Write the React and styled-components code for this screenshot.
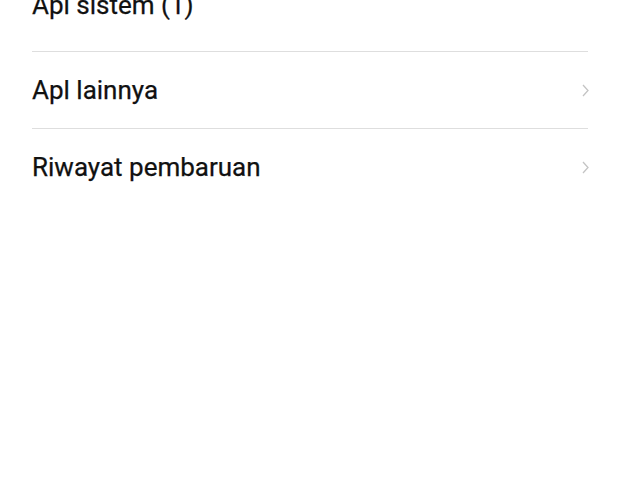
import React from 'react';
import styled, { createGlobalStyle } from 'styled-components';

const GlobalStyle = createGlobalStyle`
  html, body {
    margin: 0;
    padding: 0;
    background: #fff;
  }
  body {
    font-family: Roboto, "Noto Sans", sans-serif;
    overflow: hidden;
  }
`;

const StPage = styled.div`
  width: 622px;
  height: 500px;
  overflow: hidden;
  background: #fff;
  padding: 0 34px 0 32px;
  box-sizing: border-box;
`;

const StList = styled.div`
  margin-top: -33px;
  display: flex;
  flex-direction: column;
`;

const StRow = styled.div`
  display: flex;
  align-items: center;
  justify-content: space-between;
  height: 76px;
  padding-bottom: ${(props) => props.$extra || 0}px;
  border-bottom: ${(props) => (props.$last ? 'none' : '1px solid #dedede')};
`;

const StLabel = styled.span`
  font-size: 26px;
  font-weight: 400;
  color: #111;
  -webkit-text-stroke: 0.25px #111;
`;

const StChevron = styled.svg`
  width: 7px;
  height: 13px;
  margin-right: -1px;
  flex: none;
`;

const Chevron = () => (
  <StChevron viewBox="0 0 7 13">
    <path d="M1 1 L6 6.5 L1 12" fill="none" stroke="#c4c4c4" strokeWidth="1.3" />
  </StChevron>
);

const items = [
  { label: 'Apl sistem (1)', extra: 8, arrow: false },
  { label: 'Apl lainnya', arrow: true },
  { label: 'Riwayat pembaruan', arrow: true, last: true },
];

const App = () => (
  <>
    <GlobalStyle />
    <StPage>
      <StList>
        {items.map((item) => (
          <StRow key={item.label} $extra={item.extra} $last={item.last}>
            <StLabel>{item.label}</StLabel>
            {item.arrow && <Chevron />}
          </StRow>
        ))}
      </StList>
    </StPage>
  </>
);

export default App;
